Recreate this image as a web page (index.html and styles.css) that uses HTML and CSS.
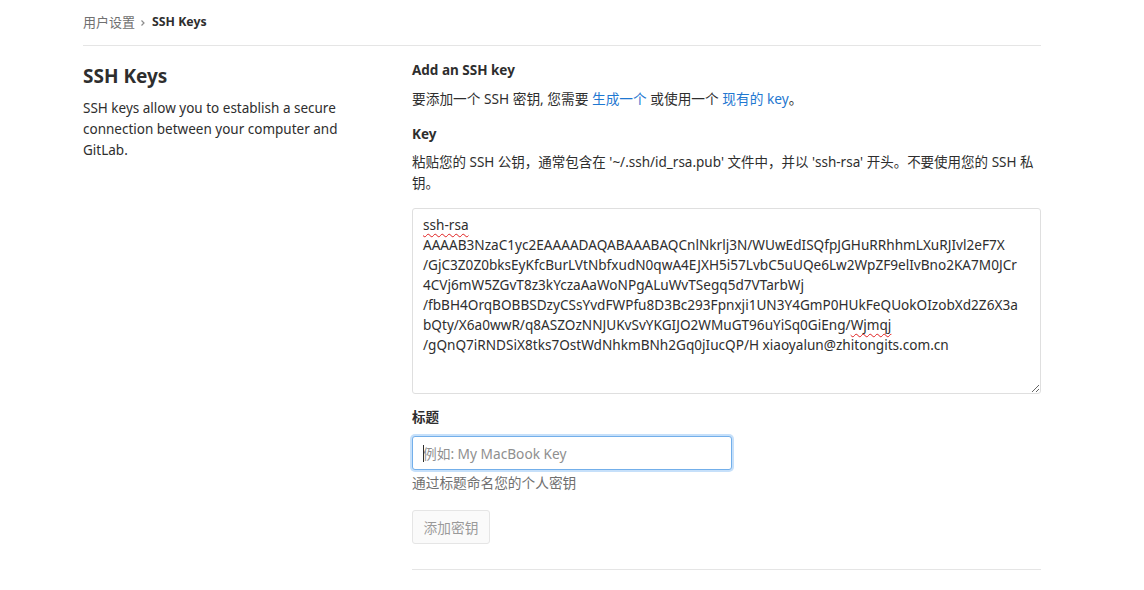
FILE: index.html
```html
<!DOCTYPE html>
<html lang="zh-CN">
<head>
<meta charset="utf-8">
<title>SSH Keys</title>
<link rel="stylesheet" href="styles.css">
</head>
<body>
<div class="page">
  <nav class="breadcrumbs">
    <a class="crumb" href="#">用户设置</a>
    <svg class="chev" width="8" height="8" viewBox="0 0 8 8"><path d="M2.5 1.5 L5 4 L2.5 6.5" fill="none" stroke="#8c8c8c" stroke-width="1.2"/></svg>
    <span class="crumb-current">SSH Keys</span>
  </nav>
  <div class="row">
    <div class="col-left">
      <h4 class="section-title">SSH Keys</h4>
      <p class="section-desc">SSH keys allow you to establish a secure connection between your computer and GitLab.</p>
    </div>
    <div class="col-right">
      <h5 class="sub-title">Add an SSH key</h5>
      <p class="text">要添加一个 SSH 密钥, 您需要 <a href="#" class="link">生成一个</a> 或使用一个 <a href="#" class="link">现有的 key</a>。</p>
      <label class="label">Key</label>
      <p class="text para">粘贴您的 SSH 公钥，通常包含在 '~/.ssh/id_rsa.pub' 文件中，并以 'ssh-rsa' 开头。不要使用您的 SSH 私钥。</p>
      <div class="key-box"><span class="ln"><span class="squiggle">ssh-rsa</span></span><span class="ln">AAAAB3NzaC1yc2EAAAADAQABAAABAQCnlNkrlj3N/WUwEdISQfpJGHuRRhhmLXuRJIvl2eF7X</span><span class="ln">/GjC3Z0Z0bksEyKfcBurLVtNbfxudN0qwA4EJXH5i57LvbC5uUQe6Lw2WpZF9elIvBno2KA7M0JCr</span><span class="ln">4CVj6mW5ZGvT8z3kYczaAaWoNPgALuWvTSegq5d7VTarbWj</span><span class="ln">/fbBH4OrqBOBBSDzyCSsYvdFWPfu8D3Bc293Fpnxji1UN3Y4GmP0HUkFeQUokOIzobXd2Z6X3a</span><span class="ln">bQty/X6a0wwR/q8ASZOzNNJUKvSvYKGIJO2WMuGT96uYiSq0GiEng/<span class="squiggle">Wjmqj</span></span><span class="ln">/gQnQ7iRNDSiX8tks7OstWdNhkmBNh2Gq0jIucQP/H xiaoyalun@zhitongits.com.cn</span></div>
      <label class="label title-label">标题</label>
      <div class="input-wrap">
        <input class="input" type="text" placeholder="例如: My MacBook Key">
        <span class="caret"></span>
      </div>
      <p class="help">通过标题命名您的个人密钥</p>
      <button class="btn" disabled>添加密钥</button>
      <hr class="divider">
    </div>
  </div>
</div>
</body>
</html>
```
FILE: styles.css
```css
html, body {
  margin: 0;
  padding: 0;
  background: #fff;
}
body {
  font-family: "Noto Sans", "Noto Sans CJK SC", sans-serif;
  color: #2e2e2e;
  font-size: 14px;
}
.page {
  width: 958px;
  margin: 0 0 0 83px;
}
.breadcrumbs {
  display: flex;
  align-items: center;
  height: 44px;
  border-bottom: 1px solid #e5e5e5;
  font-size: 13px;
  line-height: 20px;
  box-sizing: content-box;
  padding-bottom: 1px;
}
.crumb {
  color: #707070;
  text-decoration: none;
}
.chev {
  margin: 1px 5px 0 4px;
}
.crumb-current {
  font-weight: 700;
  color: #2e2e2e;
  font-size: 12.3px;
}
.row {
  display: flex;
  gap: 30px;
}
.col-left {
  width: 299px;
  flex: none;
}
.col-right {
  width: 629px;
  flex: none;
}
.section-title {
  margin: 18px 0 0;
  font-size: 19px;
  line-height: 24px;
  font-weight: 700;
}
.section-desc {
  margin: 10px 0 0;
  font-size: 13.5px;
  line-height: 21px;
}
.sub-title {
  margin: 14px 0 0;
  font-size: 13.5px;
  line-height: 20px;
  font-weight: 700;
}
.text {
  margin: 9px 0 0;
  font-size: 13.7px;
  line-height: 20px;
}
.para {
  margin-top: 8px;
  line-height: 21px;
  font-size: 13.5px;
}
.link {
  color: #1f78d1;
  text-decoration: none;
}
.label {
  display: block;
  margin-top: 15px;
  font-weight: 700;
  font-size: 13.5px;
  line-height: 20px;
}
.key-box {
  margin-top: 14px;
  height: 172px;
  border: 1px solid #dfdfdf;
  border-radius: 3px;
  padding: 6px 10px;
  font-size: 13.6px;
  line-height: 20px;
  resize: vertical;
  overflow: hidden;
  color: #2e2e2e;
}
.ln {
  display: block;
  white-space: nowrap;
}
.squiggle {
  text-decoration: underline wavy #e02020;
  text-decoration-thickness: 1px;
  text-underline-offset: 3px;
}
.title-label {
  margin-top: 13px;
}
.input-wrap {
  position: relative;
  width: 320px;
  margin-top: 9px;
}
.input {
  display: block;
  width: 100%;
  height: 34px;
  box-sizing: border-box;
  padding: 0 10px;
  border: 1px solid #73afea;
  border-radius: 3px;
  box-shadow: 0 0 0 2px #c6e0fa;
  outline: none;
  font-family: "Noto Sans", "Noto Sans CJK SC", sans-serif;
  font-size: 13.7px;
  color: #2e2e2e;
}
.input::placeholder {
  color: #8f8f8f;
}
.caret {
  position: absolute;
  left: 11px;
  top: 9px;
  width: 1px;
  height: 17px;
  background: #2e2e2e;
}
.help {
  margin: 3px 0 0;
  color: #707070;
  font-size: 13.7px;
  line-height: 20px;
}
.btn {
  display: block;
  margin-top: 17px;
  width: 78px;
  height: 34px;
  padding: 0;
  border: 1px solid #e5e5e5;
  border-radius: 3px;
  background: #fafafa;
  color: #9a9a9a;
  font-family: "Noto Sans", "Noto Sans CJK SC", sans-serif;
  font-size: 13.7px;
}
.divider {
  margin: 25px 0 0;
  border: 0;
  border-top: 1px solid #e5e5e5;
  height: 0;
}
```
